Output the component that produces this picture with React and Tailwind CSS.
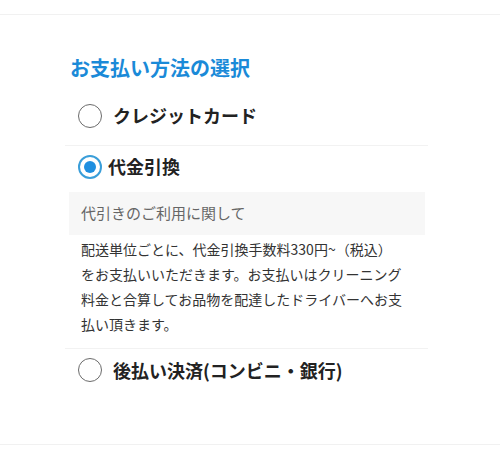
const font = { fontFamily: '"Noto Sans CJK JP", "Noto Sans", sans-serif' };

function Radio({ checked }) {
  if (checked) {
    return (
      <span className="flex h-[24px] w-[24px] shrink-0 items-center justify-center rounded-full border-2 border-[#3a9ed9] bg-white">
        <span className="h-[12px] w-[12px] rounded-full bg-[#1f8fe0]" />
      </span>
    );
  }
  return <span className="h-[24px] w-[24px] shrink-0 rounded-full border-[1.5px] border-[#6b6b6b] bg-white" />;
}

export default function App() {
  return (
    <div className="h-[460px] w-[500px] bg-white text-[#222]" style={font}>
      <div className="h-[15px] border-b border-[#f1f1f1]" />

      <div className="ml-[65px] w-[363px] pt-[39px]">
        <h2 className="pl-[5px] text-[20px] font-bold leading-[28px] text-[#1a8ad8]">お支払い方法の選択</h2>

        <label className="mt-[4px] flex h-[60px] items-center gap-[11px] border-b border-[#f2f2f2] pl-[13px]">
          <Radio />
          <span className="text-[18px] font-bold">クレジットカード</span>
        </label>

        <label className="flex h-[41px] items-center gap-[6px] pl-[13px]">
          <Radio checked />
          <span className="text-[18px] font-bold">代金引換</span>
        </label>

        <div className="mt-[5px] mr-[3px] ml-[4px] flex h-[43px] items-center bg-[#f7f7f7] pl-[12px] text-[15px] text-[#666]">
          代引きのご利用に関して
        </div>

        <p className="border-b border-[#f2f2f2] pt-[2px] pb-[11px] pl-[16px] text-[14px] leading-[25px] text-[#333]">
          配送単位ごとに、代金引換手数料330円~（税込）
          <br />
          をお支払いいただきます。お支払いはクリーニング
          <br />
          料金と合算してお品物を配達したドライバーへお支
          <br />
          払い頂きます。
        </p>

        <label className="flex h-[42px] items-center gap-[11px] pl-[13px]">
          <Radio />
          <span className="text-[18px] font-bold">後払い決済(コンビニ・銀行)</span>
        </label>
      </div>

      <div className="mt-[53px] border-b border-[#f1f1f1]" />
    </div>
  );
}
